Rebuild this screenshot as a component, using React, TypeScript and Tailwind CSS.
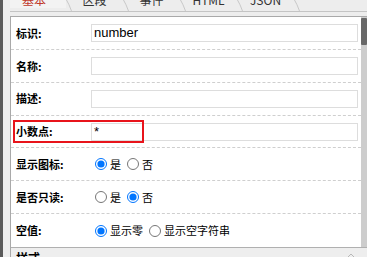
import React from "react";

const tabs = ["基本", "区段", "事件", "HTML", "JSON"];

const cjk = "font-['Noto_Sans_CJK_SC','Noto_Sans',sans-serif]";

function Sep() {
  return (
    <svg width="6" height="11" viewBox="0 0 6 11" className="shrink-0">
      <path d="M0.5 0 Q3 4 5.5 11" stroke="#c8c8c8" strokeWidth="1" fill="none" />
    </svg>
  );
}

function Radio({ name, checked, label }: { name: string; checked?: boolean; label: string }) {
  return (
    <label className="flex items-center gap-[3px]">
      <input type="radio" name={name} defaultChecked={checked} className="m-0 w-[12px] h-[12px]" />
      <span>{label}</span>
    </label>
  );
}

function Row({ label, children, last }: { label: string; children: React.ReactNode; last?: boolean }) {
  return (
    <div
      className={`relative h-[33px] flex items-center ${last ? "" : "border-b border-dashed border-[#cfcfcf]"}`}
    >
      <div className="w-[80px] shrink-0 pl-[5px] font-bold text-black">{label}</div>
      <div className="flex-1 pr-[3px] flex items-center">{children}</div>
    </div>
  );
}

function TextBox({ value }: { value?: string }) {
  return (
    <div className="w-full h-[18px] border border-[#dddddd] bg-white px-[2px] text-[13px] leading-[16px] font-['Liberation_Sans',Arial,sans-serif] text-black">
      {value}
    </div>
  );
}

export default function App() {
  return (
    <div className={`w-[367px] h-[257px] flex bg-[#ededed] overflow-hidden text-[11px] ${cjk}`}>
      <div className="w-[3px] bg-[#5a5a5a] shrink-0" />
      <div className="flex-1 flex flex-col pl-[7px] min-w-0">
        {/* tabs, scrolled so only their lower part shows */}
        <div className="h-[12px] shrink-0 flex items-start border-b border-[#c4c4c4] overflow-hidden text-[12px]">
          {tabs.map((t, i) => (
            <div key={t} className="flex items-start">
              <div
                className={`-mt-[8px] leading-[16px] text-center ${i === 0 ? "w-[56px] pr-[8px] text-[#c0392b] bg-[#f3f3f3]" : "w-[51px] pr-[6px] text-[#333]"}`}
              >
                {t}
              </div>
              <Sep />
            </div>
          ))}
        </div>
        <div className="h-[4px] shrink-0" />
        {/* panel */}
        <div className="flex-1 flex flex-col border-t border-l border-[#a9a9a9] bg-white min-h-0">
          <div className="flex flex-1 min-h-0">
            <div className="flex-1 flex flex-col">
              <Row label="标识:">
                <TextBox value="number" />
              </Row>
              <Row label="名称:">
                <TextBox />
              </Row>
              <Row label="描述:">
                <TextBox />
              </Row>
              <Row label="小数点:">
                <TextBox value="*" />
                <div className="absolute left-[2px] top-[4px] w-[131px] h-[23px] border-2 border-[#e8141b]" />
              </Row>
              <Row label="显示图标:">
                <div className="flex items-center gap-[6px] pl-[4px]">
                  <Radio name="icon" checked label="是" />
                  <Radio name="icon" label="否" />
                </div>
              </Row>
              <Row label="是否只读:">
                <div className="flex items-center gap-[6px] pl-[4px]">
                  <Radio name="ro" label="是" />
                  <Radio name="ro" checked label="否" />
                </div>
              </Row>
              <Row label="空值:" last>
                <div className="flex items-center gap-[6px] pl-[4px]">
                  <Radio name="empty" checked label="显示零" />
                  <Radio name="empty" label="显示空字符串" />
                </div>
              </Row>
            </div>
            <div className="w-[6px] shrink-0 bg-[#cdcdcd] pt-[1px]">
              <div className="h-[27px] bg-[#686868] rounded-[1px]" />
            </div>
          </div>
          {/* collapsed section header */}
          <div className="h-[10px] shrink-0 border-t border-[#b0b0b0] bg-[#eeeeee] flex items-start justify-between overflow-hidden">
            <div className="pl-[5px] pt-[3px] font-bold text-[12px] leading-[14px] text-black">样式</div>
            <svg width="10" height="10" viewBox="0 0 10 10" className="mr-[11px] mt-[4px]">
              <path d="M2 5 L5 2 L8 5 M2 9 L5 6 L8 9" stroke="#b8b8b8" strokeWidth="1" fill="none" />
            </svg>
          </div>
        </div>
      </div>
    </div>
  );
}
